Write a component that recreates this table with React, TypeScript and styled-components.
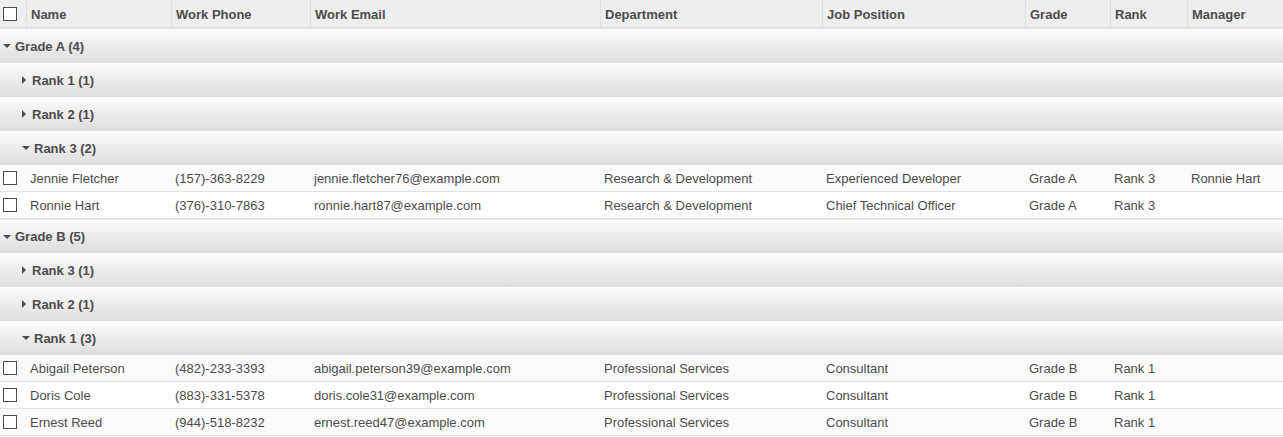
import React from "react";
import styled, { createGlobalStyle, css } from "styled-components";

const GlobalStyle = createGlobalStyle`
	body {
		margin: 0;
		background: #ffffff;
		font-family: "Liberation Sans", Arial, sans-serif;
		font-size: 13px;
		color: #4c4c4c;
	}
`;

const columns = [
	{ key: "check",		label: "",				width: 26 },
	{ key: "name",		label: "Name",			width: 145 },
	{ key: "phone",		label: "Work Phone",	width: 139 },
	{ key: "email",		label: "Work Email",	width: 290 },
	{ key: "dept",		label: "Department",	width: 222 },
	{ key: "job",		label: "Job Position",	width: 203 },
	{ key: "grade",		label: "Grade",			width: 85 },
	{ key: "rank",		label: "Rank",			width: 77 },
	{ key: "manager",	label: "Manager",		width: 96 },
];

type Person = {
	name: string;
	phone: string;
	email: string;
	dept: string;
	job: string;
	grade: string;
	rank: string;
	manager: string;
};

type Group = {
	label: string;
	count: number;
	open: boolean;
	people?: Person[];
};

const grades: { label: string; count: number; ranks: Group[] }[] = [
	{
		label: "Grade A",
		count: 4,
		ranks: [
			{ label: "Rank 1", count: 1, open: false },
			{ label: "Rank 2", count: 1, open: false },
			{
				label: "Rank 3", count: 2, open: true, people: [
					{ name: "Jennie Fletcher", phone: "(157)-363-8229", email: "jennie.fletcher76@example.com", dept: "Research & Development", job: "Experienced Developer", grade: "Grade A", rank: "Rank 3", manager: "Ronnie Hart" },
					{ name: "Ronnie Hart", phone: "(376)-310-7863", email: "ronnie.hart87@example.com", dept: "Research & Development", job: "Chief Technical Officer", grade: "Grade A", rank: "Rank 3", manager: "" },
				],
			},
		],
	},
	{
		label: "Grade B",
		count: 5,
		ranks: [
			{ label: "Rank 3", count: 1, open: false },
			{ label: "Rank 2", count: 1, open: false },
			{
				label: "Rank 1", count: 3, open: true, people: [
					{ name: "Abigail Peterson", phone: "(482)-233-3393", email: "abigail.peterson39@example.com", dept: "Professional Services", job: "Consultant", grade: "Grade B", rank: "Rank 1", manager: "" },
					{ name: "Doris Cole", phone: "(883)-331-5378", email: "doris.cole31@example.com", dept: "Professional Services", job: "Consultant", grade: "Grade B", rank: "Rank 1", manager: "" },
					{ name: "Ernest Reed", phone: "(944)-518-8232", email: "ernest.reed47@example.com", dept: "Professional Services", job: "Consultant", grade: "Grade B", rank: "Rank 1", manager: "" },
				],
			},
		],
	},
];

const Table = styled.table`
	width: 1283px;
	border-collapse: separate;
	border-spacing: 0;
	table-layout: fixed;
`;

const HeadRow = styled.tr`
	height: 29px;
	background: #eeeeee;
`;

const HeadCell = styled.th`
	box-sizing: border-box;
	padding: 2px 4px 0;
	text-align: left;
	font-weight: bold;
	color: #4c4c4c;
	white-space: nowrap;
	border-left: 1px solid #dfdfdf;
	border-bottom: 2px solid #dee2e6;

	&:first-child {
		border-left: none;
		padding: 0 3px;
	}
`;

const GroupRow = styled.tr`
	height: 34px;
	background: linear-gradient(#fcfcfc, #dddddd);
`;

const GroupCell = styled.td<{ $level: number; $afterData: boolean }>`
	box-sizing: border-box;
	padding: 0 0 0 ${ ({ $level }) => $level === 0 ? 3 : 22 }px;
	font-weight: bold;
	color: #4c4c4c;
	white-space: nowrap;
	${ ({ $afterData }) => $afterData && css`
		border-top: 1px solid #e6e6e6;
	` }
`;

const Caret = styled.span<{ $open: boolean }>`
	display: inline-block;
	width: 0;
	height: 0;
	vertical-align: middle;
	position: relative;
	top: -1px;
	${ ({ $open }) => $open
		? css`
			border-left: 4px solid transparent;
			border-right: 4px solid transparent;
			border-top: 4px solid #4c4c4c;
			margin-right: 4px;
		`
		: css`
			border-top: 4px solid transparent;
			border-bottom: 4px solid transparent;
			border-left: 4px solid #4c4c4c;
			margin-right: 6px;
		` }
`;

const DataRow = styled.tr<{ $odd: boolean }>`
	height: 27px;
	background: ${ ({ $odd }) => $odd ? "#fbfbfb" : "#ffffff" };
`;

const DataCell = styled.td`
	box-sizing: border-box;
	padding: 0 4px;
	white-space: nowrap;
	overflow: hidden;
	color: #4c4c4c;
	border-bottom: 1px solid #dee2e6;

	&:first-child {
		padding: 0 3px;
	}
`;

const Box = styled.span`
	display: block;
	width: 14px;
	height: 14px;
	box-sizing: border-box;
	border: 1px solid #4c4c4c;
	background: #ffffff;
`;

const fields: (keyof Person)[] = ["name", "phone", "email", "dept", "job", "grade", "rank", "manager"];

export default function App() {
	let afterData = false;
	const rows: React.ReactNode[] = [];

	grades.forEach(grade => {
		rows.push(
			<GroupRow key={ grade.label }>
				<GroupCell $level={ 0 } $afterData={ afterData } colSpan={ columns.length }>
					<Caret $open />{ `${ grade.label } (${ grade.count })` }
				</GroupCell>
			</GroupRow>
		);
		afterData = false;
		grade.ranks.forEach(rank => {
			rows.push(
				<GroupRow key={ `${ grade.label }-${ rank.label }` }>
					<GroupCell $level={ 1 } $afterData={ afterData } colSpan={ columns.length }>
						<Caret $open={ rank.open } />{ `${ rank.label } (${ rank.count })` }
					</GroupCell>
				</GroupRow>
			);
			afterData = false;
			if (rank.open && rank.people) {
				rank.people.forEach((person, i) => {
					rows.push(
						<DataRow key={ person.email } $odd={ i % 2 === 0 }>
							<DataCell><Box /></DataCell>
							{ fields.map(field => (
								<DataCell key={ field }>{ person[field] }</DataCell>
							)) }
						</DataRow>
					);
				});
				afterData = true;
			}
		});
	});

	return (
		<>
			<GlobalStyle />
			<Table>
				<colgroup>
					{ columns.map(col => <col key={ col.key } style={{ width: col.width }} />) }
				</colgroup>
				<thead>
					<HeadRow>
						{ columns.map(col => (
							<HeadCell key={ col.key }>
								{ col.key === "check" ? <Box /> : col.label }
							</HeadCell>
						)) }
					</HeadRow>
				</thead>
				<tbody>{ rows }</tbody>
			</Table>
		</>
	);
}
